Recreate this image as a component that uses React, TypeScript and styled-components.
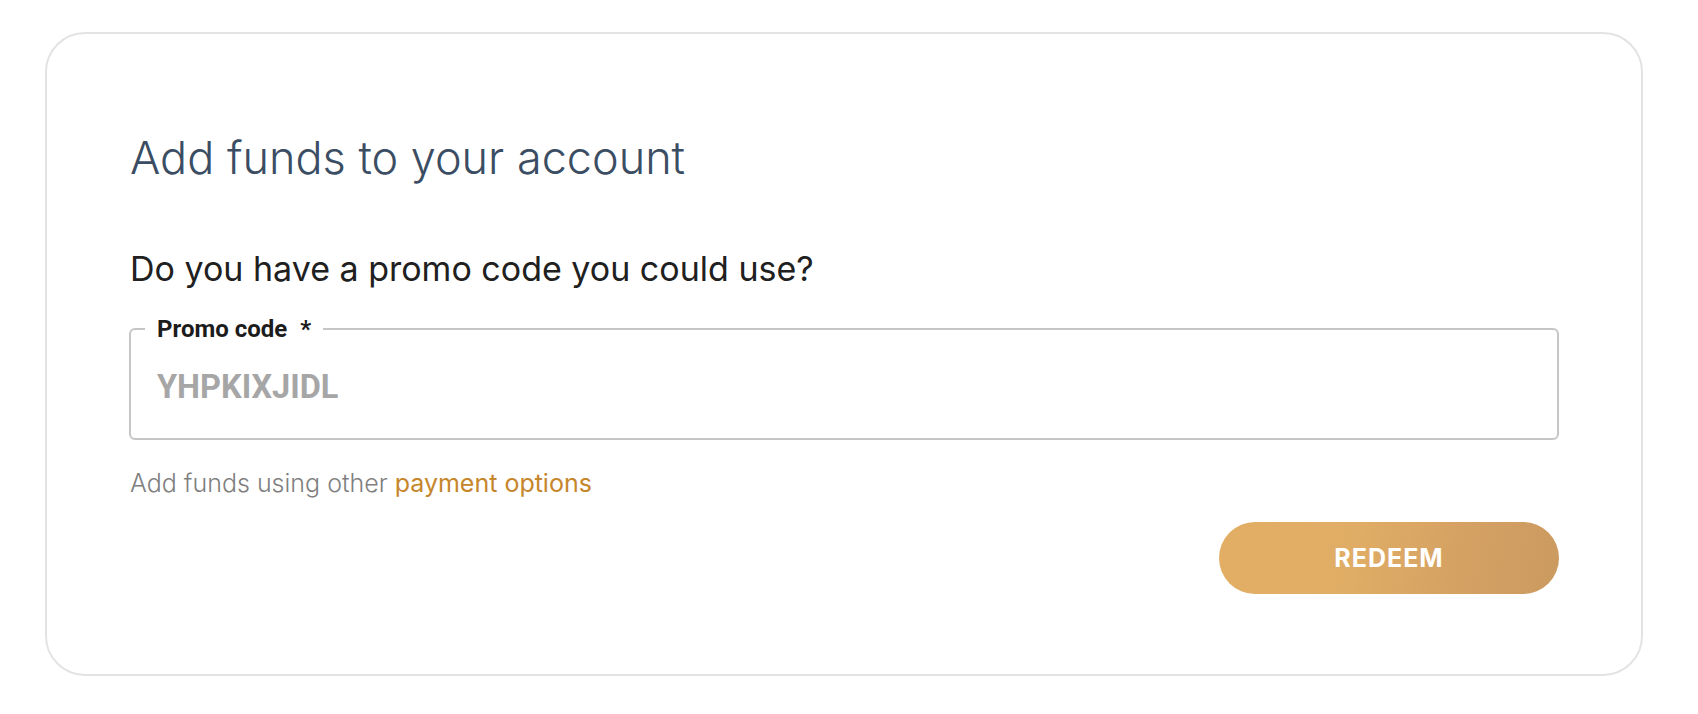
import styled, { createGlobalStyle } from "styled-components";

const GlobalStyle = createGlobalStyle`
  html, body {
    margin: 0;
    padding: 0;
    background: #ffffff;
  }
  body {
    font-family: "Inter", "Roboto", sans-serif;
  }
`;

const Page = styled.div`
  padding: 32px 0 0 45px;
`;

const Card = styled.section`
  box-sizing: border-box;
  width: 1598px;
  height: 644px;
  border: 2px solid #e3e3e3;
  border-radius: 40px;
  padding: 96px 82px 79px 83px;
  display: flex;
  flex-direction: column;
`;

const Title = styled.h1`
  margin: 0;
  font-family: "Inter", sans-serif;
  font-weight: 300;
  font-size: 45px;
  line-height: 56px;
  color: #3b4d63;
`;

const Question = styled.p`
  margin: 63px 0 0;
  font-family: "Inter", sans-serif;
  font-weight: 400;
  font-size: 34px;
  line-height: 40px;
  color: #202020;
`;

const Field = styled.fieldset`
  margin: 28px 0 0 -1px;
  padding: 0 14px 33px;
  border: 2px solid #c6c6c6;
  border-radius: 6px;
  min-width: 0;
`;

const Legend = styled.legend`
  padding: 0 12px;
  font-family: "Roboto", sans-serif;
  font-weight: 700;
  font-size: 24px;
  line-height: 24px;
  color: #1c1c1c;
`;

const Required = styled.span`
  margin-left: 13px;
`;

const CodeInput = styled.input`
  display: block;
  box-sizing: border-box;
  width: 100%;
  margin-top: 28px;
  padding: 0 12px;
  border: none;
  outline: none;
  background: transparent;
  font-family: "Roboto", sans-serif;
  font-weight: 700;
  font-size: 32.5px;
  line-height: 36px;
  height: 36px;
  color: #a6a6a6;

  &::placeholder {
    color: #a6a6a6;
    opacity: 1;
  }
`;

const Helper = styled.p`
  margin: 28px 0 0;
  font-family: "Inter", sans-serif;
  font-weight: 300;
  font-size: 25px;
  line-height: 30px;
  color: #7f7f7f;
`;

const Link = styled.a`
  color: #c6862b;
  font-weight: 400;
  text-decoration: none;
  cursor: pointer;
`;

const Actions = styled.div`
  display: flex;
  justify-content: flex-end;
  margin-top: 24px;
`;

const RedeemButton = styled.button`
  width: 340px;
  height: 72px;
  border: none;
  border-radius: 36px;
  background: linear-gradient(
    100deg,
    #e2ae64 0%,
    #e0ad66 40%,
    #d5a263 68%,
    #cb9a60 100%
  );
  color: #ffffff;
  font-family: "Inter", sans-serif;
  font-weight: 700;
  font-size: 25px;
  letter-spacing: 1px;
  cursor: pointer;
`;

export default function App() {
  return (
    <>
      <GlobalStyle />
      <Page>
        <Card>
          <Title>Add funds to your account</Title>
          <Question>Do you have a promo code you could use?</Question>
          <Field>
            <Legend>
              Promo code<Required>*</Required>
            </Legend>
            <CodeInput placeholder="YHPKIXJIDL" readOnly />
          </Field>
          <Helper>
            Add funds using other <Link>payment options</Link>
          </Helper>
          <Actions>
            <RedeemButton>REDEEM</RedeemButton>
          </Actions>
        </Card>
      </Page>
    </>
  );
}
